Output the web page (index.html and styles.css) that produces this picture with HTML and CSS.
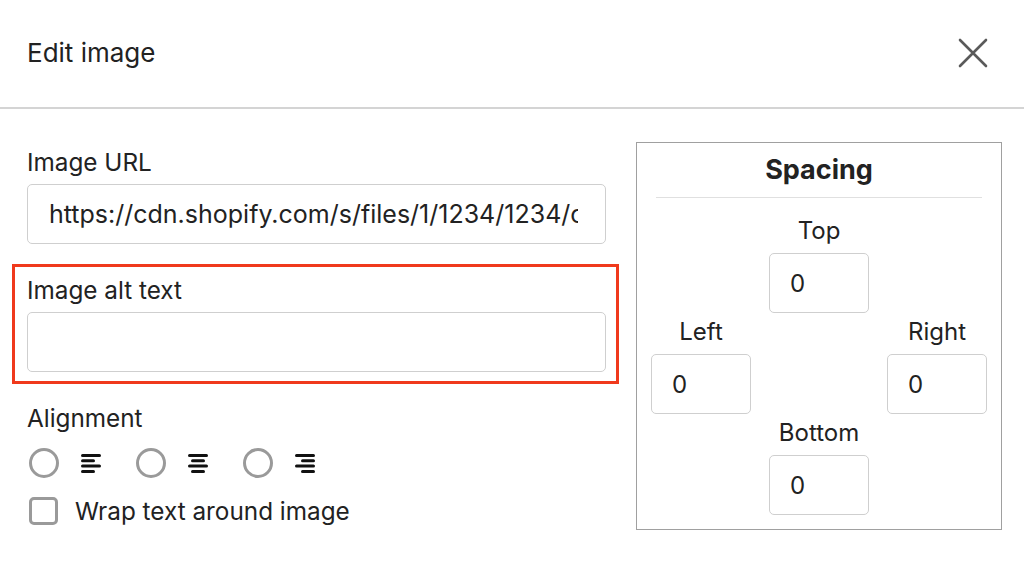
FILE: index.html
```html
<!DOCTYPE html>
<html lang="en">
<head>
<meta charset="utf-8">
<title>Edit image</title>
<link rel="stylesheet" href="styles.css">
</head>
<body>
<div class="header">
  <h1 class="title">Edit image</h1>
  <svg class="close" viewBox="0 0 30 30" aria-label="Close">
    <path d="M2 2 L28 28 M28 2 L2 28" stroke="#5a5a5a" stroke-width="2.6" stroke-linecap="round" fill="none"/>
  </svg>
</div>
<div class="main">
  <div class="left">
    <label class="label">Image URL</label>
    <input class="text-input" type="text" value="https://cdn.shopify.com/s/files/1/1234/1234/cat.jpg">
    <div class="highlight">
      <label class="label">Image alt text</label>
      <input class="text-input" type="text" value="">
    </div>
    <div class="label align-label">Alignment</div>
    <div class="align-row">
      <div class="align-opt">
        <span class="radio"></span>
        <svg class="align-icon" viewBox="0 0 20 19">
          <rect x="0" y="0" width="20" height="3" rx="1.5"/>
          <rect x="0" y="5.3" width="14" height="3" rx="1.5"/>
          <rect x="0" y="10.6" width="20" height="3" rx="1.5"/>
          <rect x="0" y="16" width="14" height="3" rx="1.5"/>
        </svg>
      </div>
      <div class="align-opt">
        <span class="radio"></span>
        <svg class="align-icon" viewBox="0 0 20 19">
          <rect x="0" y="0" width="20" height="3" rx="1.5"/>
          <rect x="3" y="5.3" width="14" height="3" rx="1.5"/>
          <rect x="0" y="10.6" width="20" height="3" rx="1.5"/>
          <rect x="3" y="16" width="14" height="3" rx="1.5"/>
        </svg>
      </div>
      <div class="align-opt">
        <span class="radio"></span>
        <svg class="align-icon" viewBox="0 0 20 19">
          <rect x="0" y="0" width="20" height="3" rx="1.5"/>
          <rect x="6" y="5.3" width="14" height="3" rx="1.5"/>
          <rect x="0" y="10.6" width="20" height="3" rx="1.5"/>
          <rect x="6" y="16" width="14" height="3" rx="1.5"/>
        </svg>
      </div>
    </div>
    <div class="check-row">
      <span class="checkbox"></span>
      <span class="check-text">Wrap text around image</span>
    </div>
  </div>
  <div class="panel">
    <h2 class="panel-title">Spacing</h2>
    <div class="divider"></div>
    <div class="grid">
      <div class="cell-label c2 r1">Top</div>
      <input class="box-input c2 r2" type="text" value="0">
      <div class="cell-label c1 r3">Left</div>
      <div class="cell-label c3 r3">Right</div>
      <input class="box-input c1 r4" type="text" value="0">
      <input class="box-input c3 r4" type="text" value="0">
      <div class="cell-label c2 r5">Bottom</div>
      <input class="box-input c2 r6" type="text" value="0">
    </div>
  </div>
</div>
</body>
</html>
```

FILE: styles.css
```css
* { box-sizing: border-box; }
html, body { margin: 0; padding: 0; background: #fff; }
body {
  width: 1024px;
  height: 566px;
  overflow: hidden;
  font-family: Inter, "Liberation Sans", sans-serif;
  color: #222;
}
.header {
  height: 109px;
  border-bottom: 2px solid #d4d4d4;
  display: flex;
  align-items: center;
  justify-content: space-between;
  padding: 0 36px 2px 27px;
}
.title {
  margin: 0;
  font-size: 26px;
  font-weight: 400;
}
.close { width: 30px; height: 30px; display: block; }
.main {
  display: flex;
  align-items: flex-start;
  gap: 30px;
  padding-left: 27px;
}
.left { width: 579px; padding-top: 38px; }
.label {
  display: block;
  font-size: 24.3px;
  line-height: 30px;
  margin-bottom: 7px;
}
.text-input {
  display: block;
  width: 100%;
  height: 60px;
  margin: 0;
  border: 1.5px solid #cfcfcf;
  border-radius: 5px;
  padding: 0 27px 0 21px;
  font-family: Inter, "Liberation Sans", sans-serif;
  font-size: 25px;
  color: #222;
  background: #fff;
  outline: none;
}
.highlight {
  margin: 20px -13px 0 -15px;
  border: 3px solid #f0391c;
  padding: 8px 10px 9px 12px;
}
.align-label { margin-top: 19px; margin-bottom: 0; }
.align-row {
  display: flex;
  align-items: center;
  gap: 35px;
  margin-top: 15px;
  padding-left: 2px;
  height: 30px;
}
.align-opt { display: flex; align-items: center; gap: 22px; }
.radio {
  display: block;
  width: 30px;
  height: 30px;
  border: 3px solid #9a9a9a;
  border-radius: 50%;
}
.align-icon { display: block; width: 20px; height: 19px; fill: #111; }
.check-row {
  display: flex;
  align-items: center;
  gap: 17px;
  margin-top: 19px;
  padding-left: 2px;
}
.checkbox {
  display: block;
  width: 29px;
  height: 28px;
  border: 3px solid #9a9a9a;
  border-radius: 5px;
}
.check-text { font-size: 24.3px; line-height: 28px; }
.panel {
  width: 366px;
  height: 388px;
  margin-top: 33px;
  border: 1.5px solid #a0a0a0;
  padding: 10px 14px 14px;
}
.panel-title {
  margin: 0;
  font-size: 27px;
  font-weight: 700;
  line-height: 34px;
  text-align: center;
}
.divider { height: 1px; background: #e0e0e0; margin: 10px 5px 18px; }
.grid {
  display: grid;
  grid-template-columns: 100px 100px 100px;
  column-gap: 18px;
  justify-content: center;
}
.cell-label {
  font-size: 24px;
  line-height: 30px;
  text-align: center;
  margin-bottom: 7px;
}
.box-input {
  width: 100px;
  height: 60px;
  margin: 0 0 4px;
  border: 1.5px solid #cfcfcf;
  border-radius: 5px;
  padding: 0 10px 0 20px;
  font-family: Inter, "Liberation Sans", sans-serif;
  font-size: 24px;
  color: #222;
  background: #fff;
  outline: none;
}
.c1 { grid-column: 1; }
.c2 { grid-column: 2; }
.c3 { grid-column: 3; }
.r1 { grid-row: 1; }
.r2 { grid-row: 2; }
.r3 { grid-row: 3; }
.r4 { grid-row: 4; }
.r5 { grid-row: 5; }
.r6 { grid-row: 6; }
```
